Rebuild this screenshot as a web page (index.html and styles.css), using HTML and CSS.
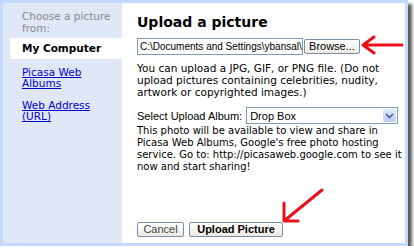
FILE: index.html
```html
<!DOCTYPE html>
<html lang="en">
<head>
    <meta charset="UTF-8">
    <title>Upload a picture</title>
    <link rel="stylesheet" href="styles.css">
</head>
<body>
    <div class="window">
        <div class="sidebar">
            <div class="sidebar-title">Choose a picture from:</div>
            <div class="source selected">My Computer</div>
            <a class="source" href="#">Picasa Web Albums</a>
            <a class="source" href="#">Web Address (URL)</a>
        </div>
        <div class="main">
            <h1>Upload a picture</h1>
            <div class="file-row">
                <div class="file-box">C:\Documents and Settings\ybansal\</div>
                <button class="btn">Browse...</button>
            </div>
            <p class="note">You can upload a JPG, GIF, or PNG file. (Do not<br>upload pictures containing celebrities, nudity,<br>artwork or copyrighted images.)</p>
            <div class="album-row">
                <span class="label">Select Upload Album:</span>
                <div class="select">
                    <span class="select-value">Drop Box</span>
                    <span class="select-arrow">
                        <svg width="9" height="6" viewBox="0 0 9 6"><path d="M1 1 L4.5 4.5 L8 1" fill="none" stroke="#4d6185" stroke-width="1.6"/></svg>
                    </span>
                </div>
            </div>
            <p class="note album-note">This photo will be available to view and share in<br>Picasa Web Albums, Google's free photo hosting<br>service. Go to: http://picasaweb.google.com to see it<br>now and start sharing!</p>
            <div class="actions">
                <button class="btn">Cancel</button>
                <button class="btn primary">Upload Picture</button>
            </div>
        </div>
    </div>

    <!-- red annotation arrows drawn over the screenshot -->
    <svg class="arrows" width="414" height="252" viewBox="0 0 414 252">
        <g fill="none" stroke="#e8101a" stroke-width="3" stroke-linecap="round" stroke-linejoin="round">
            <path d="M402 45 L363 45 M374 37 L363 45 L374 53"/>
            <path d="M322 190 L284 221 M284 203 L284 221 L298 221"/>
        </g>
    </svg>
</body>
</html>
```

FILE: styles.css
```css
body {
    margin: 0;
    background-color: #fff;
    font-family: "DejaVu Sans", Verdana, sans-serif;
    font-size: 10.5px;
    position: relative;
}
.window {
    display: flex;
    width: 408px;
    height: 246px;
    box-sizing: border-box;
    border: 3px solid #c3d9ff;
    box-shadow: 4px 4px 3px #5a5a5a;
}
.sidebar {
    width: 119px;
    flex-shrink: 0;
    background-color: #e0e8f8;
    display: flex;
    flex-direction: column;
    padding-top: 7px;
}
.sidebar-title {
    color: #888;
    padding: 0 10px 0 19px;
    line-height: 12px;
    height: 28px;
}
.source {
    display: block;
    margin-left: 7px;
    padding: 4px 5px 4px 12px;
    line-height: 11px;
    color: #0000cc;
}
.selected {
    background-color: #fff;
    color: #000;
    font-weight: bold;
    padding-top: 5px;
    padding-bottom: 5px;
    margin-bottom: 4px;
}
.source + .source {
    margin-bottom: 3px;
}
.main {
    flex: 1;
    min-width: 0;
    background-color: #fff;
    padding: 11px 2px 3px 15px;
    display: flex;
    flex-direction: column;
}
h1 {
    font-size: 14px;
    line-height: 17px;
    margin: 0 0 7px 0;
    color: #000;
}
.file-row {
    display: flex;
    align-items: center;
    gap: 1px;
}
.file-box {
    width: 166px;
    height: 17px;
    flex-shrink: 0;
    box-sizing: border-box;
    border: 1px solid #7f9db9;
    font-family: "Liberation Sans", Arial, sans-serif;
    font-size: 10px;
    line-height: 15px;
    padding-left: 2px;
    white-space: nowrap;
    overflow: hidden;
}
.btn {
    font-family: "Liberation Sans", Arial, sans-serif;
    font-size: 11px;
    height: 15px;
    padding: 0 4px;
    border: 1px solid #7a8ea8;
    border-radius: 2px;
    background: linear-gradient(#fff, #ece9e0);
    color: #000;
    line-height: 13px;
    white-space: nowrap;
    flex-shrink: 0;
}
.file-row .btn {
    width: 56px;
}
.note {
    margin: 7px 0 0 0;
    line-height: 12px;
    color: #000;
    white-space: nowrap;
}
.album-row {
    display: flex;
    align-items: center;
    gap: 4px;
    margin-top: 9px;
    white-space: nowrap;
}
.label {
    font-family: "Liberation Sans", Arial, sans-serif;
    font-size: 11px;
}
.select {
    width: 152px;
    height: 17px;
    flex-shrink: 0;
    box-sizing: border-box;
    border: 1px solid #7f9db9;
    display: flex;
    align-items: center;
    font-family: "Liberation Sans", Arial, sans-serif;
    font-size: 11px;
}
.select-value {
    flex: 1;
    padding-left: 3px;
}
.select-arrow {
    width: 13px;
    height: 13px;
    margin-right: 1px;
    background: linear-gradient(#dfe9fd, #b9cdf7);
    border-radius: 2px;
    display: flex;
    align-items: center;
    justify-content: center;
}
.album-note {
    margin-top: 1px;
    font-size: 10px;
}
.actions {
    margin-top: auto;
    display: flex;
    gap: 5px;
    padding-bottom: 3px;
}
.actions .btn:first-child {
    width: 47px;
    color: #444;
}
.primary {
    font-weight: bold;
    width: 94px;
}
.arrows {
    position: absolute;
    left: 0;
    top: 0;
}
```
